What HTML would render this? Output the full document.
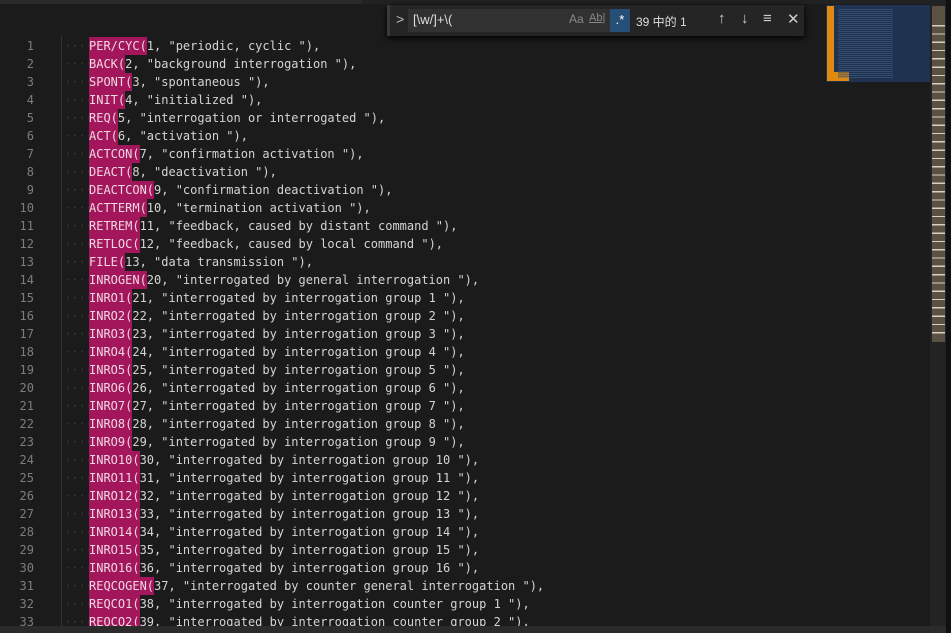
<!DOCTYPE html>
<html><head><meta charset="utf-8"><style>
html,body{margin:0;padding:0;width:951px;height:633px;overflow:hidden;background:#1b1b1b;}
body{position:relative;font-family:"DejaVu Sans Mono","Liberation Mono",monospace;font-size:12px;}
.ln{position:absolute;left:0;width:34px;text-align:right;color:#7d7d7d;height:18px;line-height:18px;}
.code{position:absolute;left:89px;height:18px;line-height:18px;color:#d4d4d4;white-space:pre;}
.hl{display:inline-block;height:18px;background:#a3165c;color:#f0d8e2;vertical-align:top;}
.dots{position:absolute;left:64px;height:18px;line-height:18px;color:#3a3a3a;white-space:pre;font-size:12px;}
.guide{position:absolute;left:61px;top:36px;width:1px;height:590px;background:#333;}
.find{position:absolute;left:387px;top:5px;width:417px;height:31px;background:#252526;box-shadow:0 2px 6px #000;border-left:3px solid #3a3a3a;box-sizing:border-box;font-family:"Liberation Sans","Noto Sans CJK SC",sans-serif;color:#ccc;}
.inp{position:absolute;left:18px;top:4px;width:222px;height:23px;background:#313131;}
</style></head><body>
<div style="position:absolute;left:0;top:0;width:951px;height:4px;background:#222"></div>
<div style="position:absolute;left:0;top:0;width:362px;height:4px;background:#2a2a2a"></div>
<div class="guide"></div>
<div id="c"></div>
<div class="find">
 <div style="position:absolute;left:6px;top:6px;font-size:14px;color:#bbb">&gt;</div>
 <div class="inp"><span style="position:absolute;left:5px;top:3px;font-size:13px;color:#ddd">[\w/]+\(</span>
  <span style="position:absolute;left:161px;top:3px;font-size:12px;color:#8a8a8a">Aa</span>
  <span style="position:absolute;left:181px;top:3px;font-size:11px;color:#8a8a8a;text-decoration:underline">Ab|</span>
  <span style="position:absolute;left:202px;top:0;width:20px;height:23px;background:#264f78;color:#fff;font-size:13px;text-align:center;line-height:22px">.*</span>
 </div>
 <div style="position:absolute;left:246px;top:8px;font-size:12px;color:#ddd">39 中的 1</div>
 <div style="position:absolute;left:328px;top:5px;font-size:15px;color:#ccc">↑</div>
 <div style="position:absolute;left:351px;top:5px;font-size:15px;color:#ccc">↓</div>
 <div style="position:absolute;left:373px;top:5px;font-size:15px;color:#ccc">≡</div>
 <div style="position:absolute;left:397px;top:5px;font-size:15px;color:#ccc">✕</div>
</div>
<div style="position:absolute;left:826px;top:5px;width:104px;height:77px;background:#1f3350"></div>
<div style="position:absolute;left:827px;top:6px;width:7px;height:75px;background:#e08a10"></div>
<div style="position:absolute;left:827px;top:72px;width:22px;height:9px;background:#e08a10"></div>
<div style="position:absolute;left:838px;top:8px;width:55px;height:70px;background:repeating-linear-gradient(#1f3350 0,#1f3350 1px,#4a6a90 1px,#4a6a90 2px);opacity:.45"></div>
<div style="position:absolute;left:930px;top:4px;width:16px;height:629px;background:#232323"></div>
<div style="position:absolute;left:932px;top:6px;width:13px;height:336px;background:#5a5144"></div>
<div style="position:absolute;left:932px;top:18px;width:13px;height:320px;background:repeating-linear-gradient(#5a5144 0,#5a5144 7px,#d8d0c0 7px,#d8d0c0 8.3px)"></div>
<div style="position:absolute;left:946px;top:0;width:5px;height:633px;background:#111"></div>
<div style="position:absolute;left:0;top:626px;width:946px;height:7px;background:#2b2b2b"></div>
<script>
var L=[["PER/CYC(","1, \"periodic, cyclic \"),"],["BACK(","2, \"background interrogation \"),"],["SPONT(","3, \"spontaneous \"),"],["INIT(","4, \"initialized \"),"],["REQ(","5, \"interrogation or interrogated \"),"],["ACT(","6, \"activation \"),"],["ACTCON(","7, \"confirmation activation \"),"],["DEACT(","8, \"deactivation \"),"],["DEACTCON(","9, \"confirmation deactivation \"),"],["ACTTERM(","10, \"termination activation \"),"],["RETREM(","11, \"feedback, caused by distant command \"),"],["RETLOC(","12, \"feedback, caused by local command \"),"],["FILE(","13, \"data transmission \"),"],["INROGEN(","20, \"interrogated by general interrogation \"),"]];
for(var i=1;i<=16;i++){var n=(i<10?"0":"")+i;L.push(["INRO"+(i<10?i:n)+"(",(20+i)+", \"interrogated by interrogation group "+i+" \"),"]);}
for(var i=0;i<9;i++)L[14+i][0]="INRO"+(i+1)+"(";
L.push(["REQCOGEN(","37, \"interrogated by counter general interrogation \"),"]);
L.push(["REQCO1(","38, \"interrogated by interrogation counter group 1 \"),"]);
L.push(["REQCO2(","39, \"interrogated by interrogation counter group 2 \"),"]);
var h="";
for(var k=0;k<L.length;k++){var t=37+18*k;
h+='<div class="ln" style="top:'+t+'px">'+(k+1)+'</div>';
h+='<div class="dots" style="top:'+t+'px">·········</div>';
h+='<div class="code" style="top:'+t+'px"><span class="hl">'+L[k][0]+'</span>'+L[k][1]+'</div>';}
document.getElementById("c").innerHTML=h;
</script>
</body></html>
